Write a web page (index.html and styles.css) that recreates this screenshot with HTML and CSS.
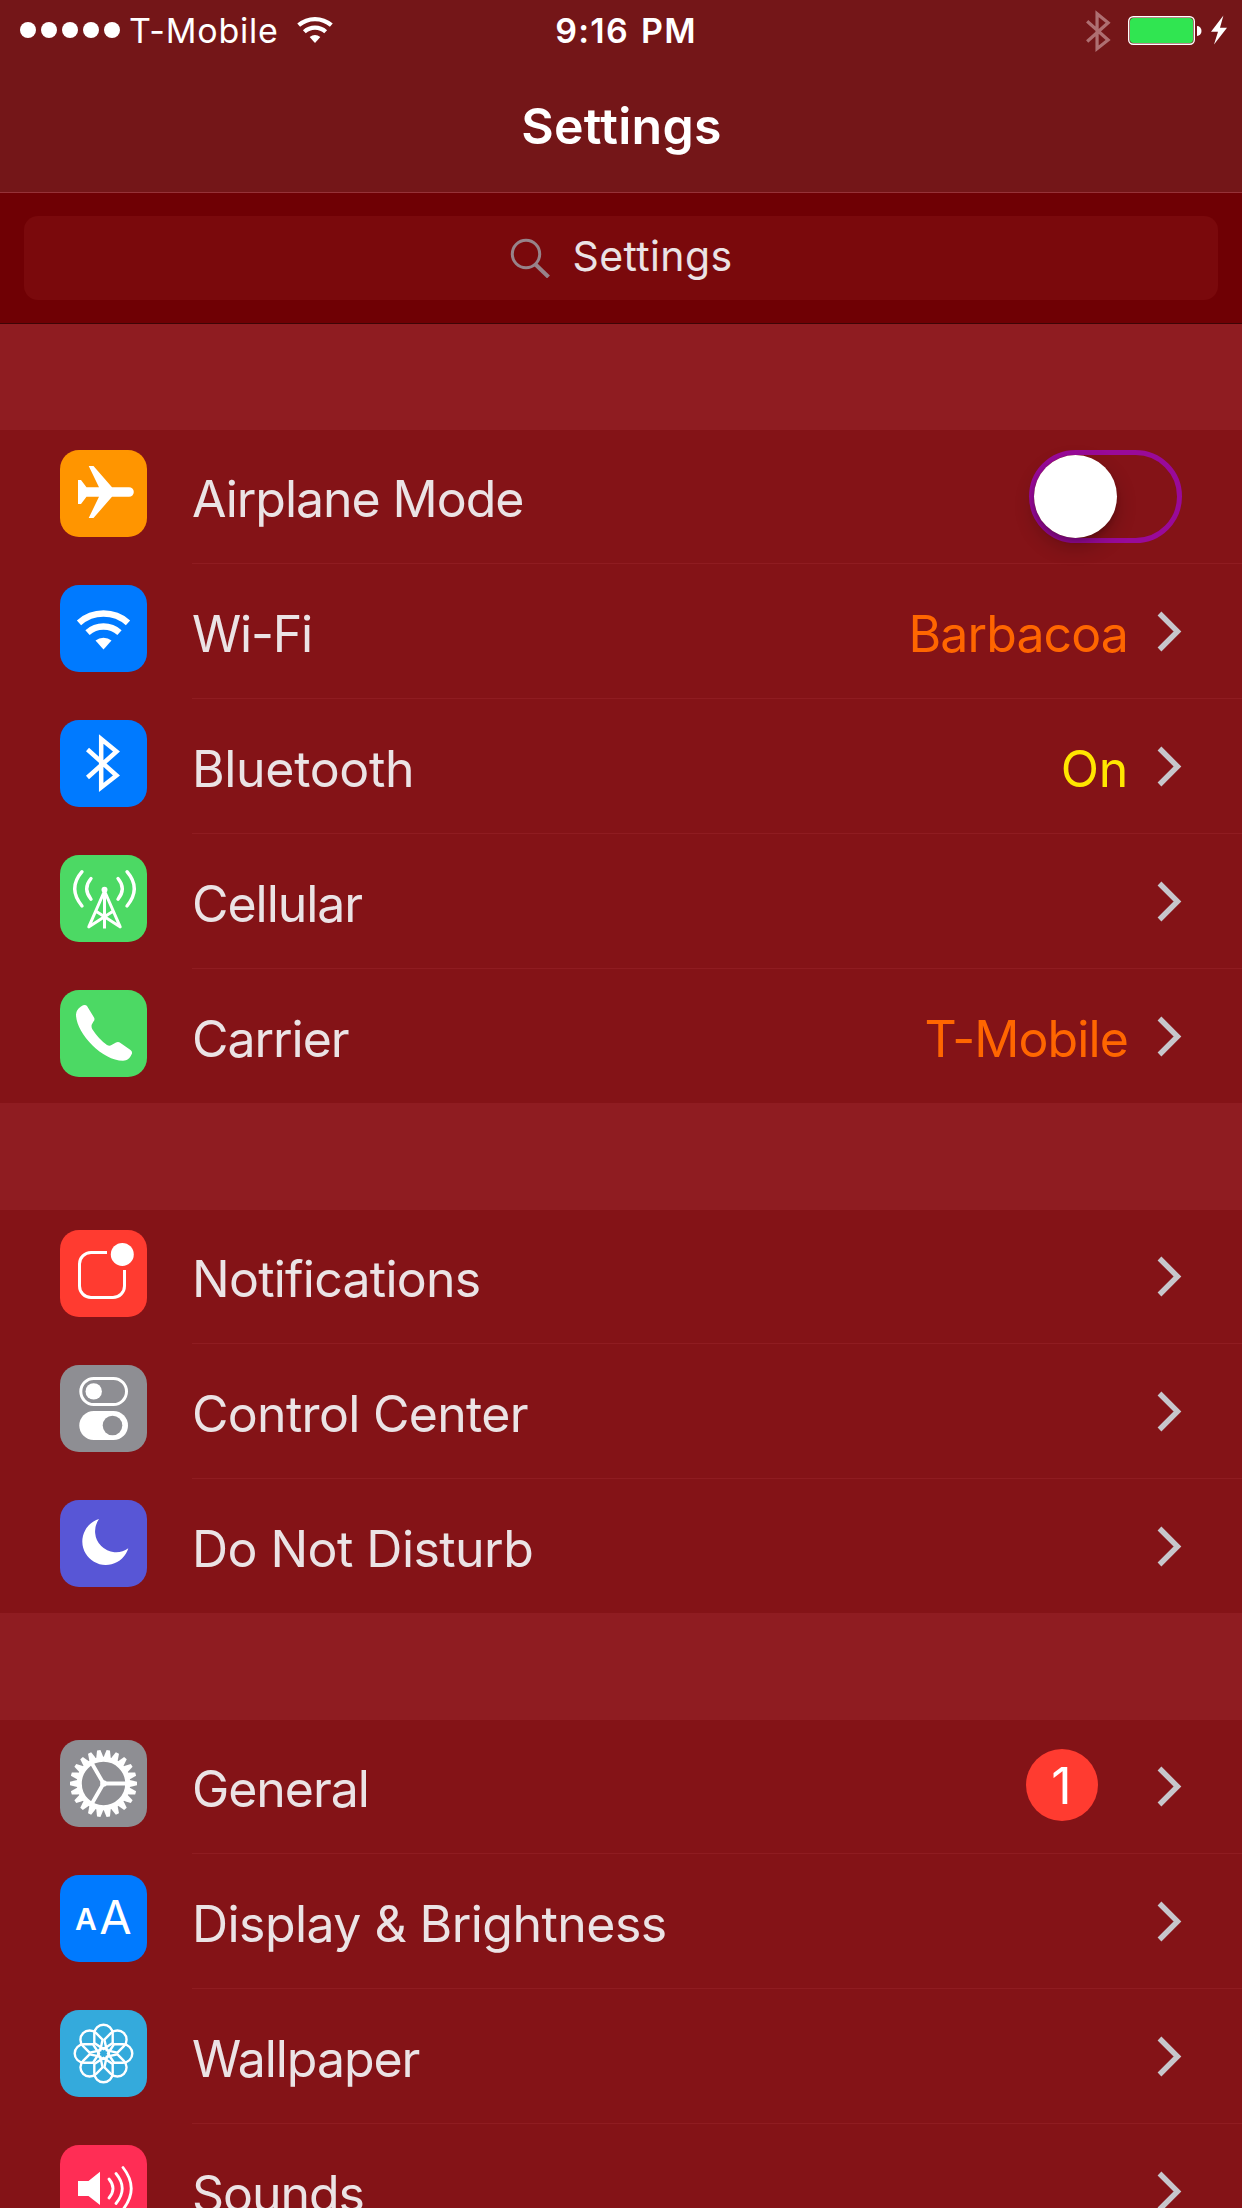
FILE: index.html
```
<!DOCTYPE html>
<html lang="en">
<head>
<meta charset="utf-8">
<title>Settings</title>
<link rel="stylesheet" href="styles.css">
</head>
<body>
<svg class="defs" width="0" height="0" aria-hidden="true">
  <symbol id="chevron" viewBox="0 0 26 42"><path d="M2.500 2.500 20.500 20.500 2.500 38.500" fill="none" stroke="#c7c7cc" stroke-width="5.400"/></symbol>
  <symbol id="bluetooth" viewBox="0 0 36 60"><path d="M3 16.500 32 42.500 16.700 54.500V6L32 18.500 3 44.500" fill="none" stroke="currentColor" stroke-width="4.500"/></symbol>
  <symbol id="wifi" viewBox="0 0 56 42"><g fill="none" stroke="currentColor" stroke-width="6.400"><path d="M3.500 13.800a37 37 0 0 1 49 0"/><path d="M12 23.600a24 24 0 0 1 32 0"/></g><path d="M20 31.500a13.300 13.300 0 0 1 16 0L28 40.500z" fill="currentColor"/></symbol>
</svg>

<header class="header">
  <div class="status">
    <div class="status-left">
      <div class="signal"><i></i><i></i><i></i><i></i><i></i></div>
      <span class="carrier">T-Mobile</span>
      <svg class="status-wifi" viewBox="0 0 56 42"><use href="#wifi"/></svg>
    </div>
    <span class="time">9:16 PM</span>
    <div class="status-right">
      <svg class="status-bt" viewBox="0 0 36 60"><use href="#bluetooth"/></svg>
      <svg class="battery" width="74" height="30" viewBox="0 0 74 30"><rect x=".7" y=".7" width="65.600" height="27.600" rx="4.500" fill="none" stroke="#fff" stroke-width="1.400"/><rect x="2" y="2" width="63" height="25" rx="3.500" fill="#30e551"/><path d="M69 10a4.500 5 0 0 1 0 10z" fill="#fff"/></svg>
      <svg class="bolt" width="16" height="30" viewBox="0 0 16 30"><path d="M12.400.6 0 16.700H7L3 29.600 16 12.700H9z" fill="#fff"/></svg>
    </div>
  </div>
  <h1 class="title">Settings</h1>
</header>

<div class="search">
  <div class="search-field">
    <svg width="42" height="42" viewBox="0 0 42 42" fill="none" stroke="#97838a"><circle cx="17" cy="18" r="13.700" stroke-width="3"/><path d="M26.300 28.200 39.500 41" stroke-width="4"/></svg>
    <span>Settings</span>
  </div>
</div>

<main>
  <section class="group">
    <div class="row">
      <svg class="icon orange" viewBox="0 0 87 87"><path fill="#fff" d="M18 30h3l5.500 7.200H39L28.700 16H33.500L52 37.200H69a4.800 4.800 0 0 1 0 9.600H52L33.500 68H28.700L39 46.800H26.500L21 54H18z"/></svg>
      <div class="body"><span class="label tight">Airplane Mode</span><div class="toggle"><div class="knob"></div></div></div>
    </div>
    <div class="row">
      <svg class="icon blue" viewBox="0 0 87 87"><use href="#wifi" x="15.500" y="24" width="56" height="42"/></svg>
      <div class="body"><span class="label tighter">Wi-Fi</span><span class="value">Barbacoa</span><svg class="chevron"><use href="#chevron"/></svg></div>
    </div>
    <div class="row">
      <svg class="icon blue" viewBox="0 0 87 87"><use href="#bluetooth" x="24.500" y="13" width="36" height="60"/></svg>
      <div class="body"><span class="label loose">Bluetooth</span><span class="value on">On</span><svg class="chevron"><use href="#chevron"/></svg></div>
    </div>
    <div class="row">
      <svg class="icon green" viewBox="0 0 87 87"><g fill="none" stroke="#fff" stroke-width="3" stroke-linecap="round"><path d="M44.500 36 28.800 71.800M44.500 36 60.200 71.800M36.400 56.500 60 71.800M52.600 56.500 29 71.800"/><path d="M44.500 36V73.500" stroke-linecap="butt"/><path stroke-width="3.400" d="M31 23.500Q22.500 33.500 31 44.200M22 16.700Q7.500 33.500 22 51M58 23.500Q66.500 33.500 58 44.200M67 16.700Q81.500 33.500 67 51"/></g><circle cx="44.500" cy="34.700" r="3" fill="#fff"/></svg>
      <div class="body"><span class="label tight">Cellular</span><svg class="chevron"><use href="#chevron"/></svg></div>
    </div>
    <div class="row">
      <svg class="icon green" viewBox="0 0 87 87"><path fill="#fff" d="M21 16.500Q25 14 27 16L34 27.500Q35.200 29.500 33.500 31.500L31.800 34.500Q31 37 32.500 39.500Q39 49.500 47 55Q49.500 56.500 51.500 55L56 52.500Q58.500 51.500 60.500 53L70.500 60Q73 62 71.500 64.500C69.500 68.500 67.500 70.700 63 70.700C42 70.700 16 43 16 24.500Q16 20 21 16.500z"/></svg>
      <div class="body"><span class="label tight">Carrier</span><span class="value">T-Mobile</span><svg class="chevron"><use href="#chevron"/></svg></div>
    </div>
  </section>

  <section class="group">
    <div class="row">
      <svg class="icon red" viewBox="0 0 87 87"><path fill="none" stroke="#fff" stroke-width="3" d="M47 22.500H31A11.500 11.500 0 0 0 19.500 34V56A11.500 11.500 0 0 0 31 67.500H53A11.500 11.500 0 0 0 64.500 56V40"/><circle cx="62.300" cy="24.400" r="11.500" fill="#fff"/></svg>
      <div class="body"><span class="label">Notifications</span><svg class="chevron"><use href="#chevron"/></svg></div>
    </div>
    <div class="row">
      <svg class="icon gray" viewBox="0 0 87 87"><rect x="20.800" y="13.500" width="45.700" height="26" rx="13" fill="none" stroke="#fff" stroke-width="3"/><circle cx="33.700" cy="26.400" r="8.200" fill="#fff"/><rect x="19.300" y="46" width="48.700" height="29" rx="14.500" fill="#fff"/><circle cx="52.500" cy="60.500" r="9.800" fill="#8e8e93"/></svg>
      <div class="body"><span class="label control">Control Center</span><svg class="chevron"><use href="#chevron"/></svg></div>
    </div>
    <div class="row">
      <svg class="icon purple" viewBox="0 0 87 87"><path fill="#fff" d="M39 19A21 21 0 0 0 68.300 48.300A23.500 23.500 0 1 1 39 19z"/></svg>
      <div class="body"><span class="label wide">Do Not Disturb</span><svg class="chevron"><use href="#chevron"/></svg></div>
    </div>
  </section>

  <section class="group">
    <div class="row">
      <svg class="icon gray" viewBox="0 0 87 87">
        <defs><path id="tooth" d="M25-3.800 28.500-3 33.500-1.700V1.700L28.500 3 25 3.800z"/><g id="teeth"><use href="#tooth"/><use href="#tooth" transform="rotate(16.364)"/><use href="#tooth" transform="rotate(32.727)"/><use href="#tooth" transform="rotate(49.091)"/><use href="#tooth" transform="rotate(65.455)"/><use href="#tooth" transform="rotate(81.818)"/><use href="#tooth" transform="rotate(98.182)"/><use href="#tooth" transform="rotate(114.545)"/><use href="#tooth" transform="rotate(130.909)"/><use href="#tooth" transform="rotate(147.273)"/><use href="#tooth" transform="rotate(163.636)"/></g></defs>
        <g transform="translate(43.500 43.500)" fill="#fff"><use href="#teeth"/><use href="#teeth" transform="rotate(180)"/><g fill="none" stroke="#fff"><circle r="24.200" stroke-width="5"/><path stroke-width="3.800" d="M0 0H24M0 0-12 -20.800M0 0-12 20.800"/></g><circle r="3.300"/></g>
      </svg>
      <div class="body"><span class="label tight">General</span><span class="badge">1</span><svg class="chevron"><use href="#chevron"/></svg></div>
    </div>
    <div class="row">
      <svg class="icon blue" viewBox="0 0 87 87"><text class="small-a" x="15" y="55">A</text><text class="big-a" x="39.300" y="59">A</text></svg>
      <div class="body"><span class="label wide">Display &amp; Brightness</span><svg class="chevron"><use href="#chevron"/></svg></div>
    </div>
    <div class="row">
      <svg class="icon sky" viewBox="0 0 87 87">
        <defs><path id="petal" d="M0-4.500-9.200-10.500V-19.600A9.200 9.200 0 0 1 9.200-19.600V-10.500z"/></defs>
        <g transform="translate(43.500 43.500)" fill="none" stroke="#fff" stroke-width="2.400"><use href="#petal"/><use href="#petal" transform="rotate(45)"/><use href="#petal" transform="rotate(90)"/><use href="#petal" transform="rotate(135)"/><use href="#petal" transform="rotate(180)"/><use href="#petal" transform="rotate(225)"/><use href="#petal" transform="rotate(270)"/><use href="#petal" transform="rotate(315)"/><circle r="5.400"/></g>
      </svg>
      <div class="body"><span class="label tight">Wallpaper</span><svg class="chevron"><use href="#chevron"/></svg></div>
    </div>
    <div class="row">
      <svg class="icon pink" viewBox="0 0 87 87"><path fill="#fff" d="M18 36H28.500L40 26.700V60L28.500 51H18z"/><path fill="none" stroke="#fff" stroke-width="2.800" stroke-linecap="round" d="M49 34Q57 43.500 49 53M56 28.500Q68.500 43.500 56 58.500M63 22.500Q79.500 43.500 63 64.500"/></svg>
      <div class="body"><span class="label tight">Sounds</span><svg class="chevron"><use href="#chevron"/></svg></div>
    </div>
  </section>
</main>
</body>
</html>
```

FILE: styles.css
```
* { box-sizing: border-box; }
body {
  margin: 0;
  height: 2208px;
  overflow: hidden;
  background: #8f1c21;
  color: #ebe3e5;
  font-family: Inter, "Liberation Sans", sans-serif;
  font-size: 50px;
}
svg { display: block; flex: none; }
.defs { display: none; }

.header {
  height: 193px;
  background: #741618;
  border-bottom: 1px solid #963238;
  color: #fff;
}
.status {
  display: grid;
  grid-template-columns: 1fr auto 1fr;
  height: 62px;
  padding: 0 15px 0 20px;
  font-size: 34px;
  line-height: 62px;
}
.status-left, .status-right { display: flex; align-items: flex-start; }
.status-right { justify-content: flex-end; }
.signal { display: flex; gap: 5px; margin-top: 22px; }
.signal i { width: 16px; height: 16px; border-radius: 50%; background: #fff; }
.carrier { margin-left: 9px; letter-spacing: 0.8px; }
.status-wifi { width: 38px; height: 28px; margin: 16px 0 0 17px; }
.time { font-weight: 600; letter-spacing: 1.3px; word-spacing: 2px; margin-left: 5px; }
.status-bt { width: 26px; height: 46px; margin: 8px 17px 0 0; color: #ae6f71; }
.battery { margin: 16px 9px 0 0; }
.bolt { margin-top: 15px; }
.title {
  margin: 14px 0 0;
  padding-left: 1px;
  text-align: center;
  font-size: 50px;
  font-weight: 600;
  line-height: 100px;
  letter-spacing: 0.3px;
}

.search {
  height: 131px;
  padding: 23px 24px;
  background: #6f0004;
  border-bottom: 1px solid #3e0506;
}
.search-field {
  display: flex;
  justify-content: center;
  gap: 22px;
  height: 84px;
  padding-right: 1px;
  border-radius: 14px;
  background: #7a090c;
  font-size: 41px;
  line-height: 80px;
  letter-spacing: 0.35px;
}
.search-field svg { margin-top: 20px; }

.group {
  margin-top: 105px;
  border-top: 1px solid #8f1c21;
  background: #841317;
}
.row {
  display: flex;
  align-items: flex-start;
  height: 135px;
  padding-left: 60px;
}
.row:first-child { height: 134px; }
.icon { width: 87px; height: 87px; margin-top: 21px; border-radius: 19px; color: #fff; }
.row:first-child .icon { margin-top: 20px; }
.orange { background: #ff9500; }
.blue { background: #007aff; }
.green { background: #4cd964; }
.red { background: #ff3b30; }
.gray { background: #8e8e93; }
.purple { background: #5856d6; }
.sky { background: #34aadc; }
.pink { background: #ff2d55; }

.body {
  flex: 1;
  display: flex;
  align-items: flex-start;
  height: 100%;
  margin-left: 45px;
  padding: 20px 59px 0 0;
  border-bottom: 1px solid #8f1c21;
}
.row:first-child .body { padding-top: 19px; }
.row:last-child { border-bottom: 1px solid #8f1c21; }
.row:last-child .body { border-bottom: 0; }
.label, .value { line-height: 100px; white-space: nowrap; letter-spacing: -0.75px; }
.label { margin-right: auto; }
.label.tight { letter-spacing: -1.05px; }
.label.tighter { letter-spacing: -1.2px; }
.label.control { letter-spacing: -0.7px; }
.label.wide { letter-spacing: -0.55px; }
.label.loose { letter-spacing: -0.35px; }
.value { color: #ff6600; letter-spacing: -0.9px; }
.value.on { color: #ffe600; letter-spacing: -0.2px; }
.chevron { width: 26px; height: 42px; margin: 27px 0 0 29px; }

.toggle {
  width: 153px;
  height: 93px;
  margin: 1px 1px 0 0;
  border: 5px solid #990a99;
  border-radius: 47px;
}
.knob {
  width: 83px;
  height: 83px;
  border-radius: 50%;
  background: #fff;
  box-shadow: 0 9px 20px rgba(0, 0, 0, 0.24), 0 3px 4px rgba(0, 0, 0, 0.15);
}
.badge {
  width: 72px;
  height: 72px;
  margin: 10px 30px 0 0;
  padding-right: 1px;
  border-radius: 50%;
  background: #ff3b30;
  color: #fff;
  line-height: 74px;
  text-align: center;
}
.small-a { font-size: 30px; font-weight: 600; fill: #fff; }
.big-a { font-size: 47px; fill: #fff; }
```
